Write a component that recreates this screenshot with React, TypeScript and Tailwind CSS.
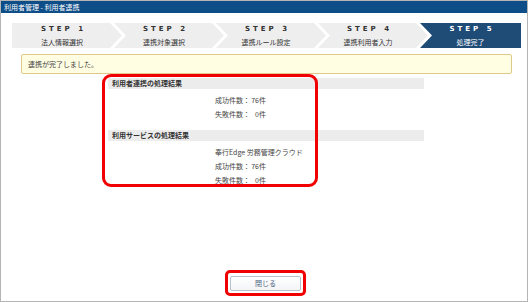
import React from 'react';

const steps = [
  { no: 1, label: '法人情報選択' },
  { no: 2, label: '連携対象選択' },
  { no: 3, label: '連携ルール設定' },
  { no: 4, label: '連携利用者入力' },
  { no: 5, label: '処理完了' },
];

const jp = { fontFamily: '"Noto Sans CJK JP", "Noto Sans", sans-serif' };

const Count: React.FC<{ label: string; value: number }> = ({ label, value }) => (
  <div className="h-[14px] flex items-center pl-[107px] text-[7px] text-[#444]">
    <span>{label}：</span>
    <span className="inline-block w-[9px] text-right">{value}</span>
    <span>件</span>
  </div>
);

const SectionHead: React.FC<{ title: string }> = ({ title }) => (
  <div className="h-[11px] flex items-center pl-[4px] bg-[#ececec] text-[7px] font-bold text-[#333]">
    {title}
  </div>
);

export default function App() {
  return (
    <div className="w-[528px] h-[302px] bg-white border border-[#b4b4b4] flex flex-col" style={jp}>
      {/* title bar */}
      <div className="h-[12px] bg-[#0d4d88] text-white text-[7px] leading-[12px] pl-[3px]">
        利用者管理 - 利用者連携
      </div>

      {/* steps */}
      <div className="flex mt-[10px] ml-[11px] mr-[6px] h-[25px]">
        {steps.map((s, i) => {
          const last = i === steps.length - 1;
          const shape =
            i === 0
              ? 'w-[110px] pr-[10px] [clip-path:polygon(0_0,calc(100%_-_12px)_0,100%_50%,calc(100%_-_12px)_100%,0_100%)]'
              : last
              ? 'flex-1 -ml-[8px] [clip-path:polygon(0_0,100%_0,100%_100%,0_100%,12px_50%)]'
              : 'w-[110px] pr-[10px] -ml-[8px] [clip-path:polygon(0_0,calc(100%_-_12px)_0,100%_50%,calc(100%_-_12px)_100%,0_100%,12px_50%)]';
          return (
            <div
              key={s.no}
              className={`${shape} ${last ? 'bg-[#1f4b77] text-white' : 'bg-[#eeeeee] text-[#333]'} flex flex-col items-center justify-center`}
            >
              <div
                className="text-[7px] font-bold leading-[10px] tracking-[3px] pl-[3px]"
                style={{ fontFamily: '"DejaVu Sans", Verdana, sans-serif' }}
              >
                STEP {s.no}
              </div>
              <div className="text-[7px] leading-[10px] mt-[3px]">{s.label}</div>
            </div>
          );
        })}
      </div>

      {/* notice */}
      <div className="mt-[6px] ml-[20px] mr-[15px] h-[20px] flex items-center pl-[6px] bg-[#fffde2] border border-[#e0c98a] rounded-[2px] text-[7px] text-[#444]">
        連携が完了しました。
      </div>

      {/* results */}
      <div className="relative ml-[107px] w-[316px] mt-[4px]">
        <SectionHead title="利用者連携の処理結果" />
        <div className="pt-[4px]">
          <Count label="成功件数" value={76} />
          <Count label="失敗件数" value={0} />
        </div>
        <div className="mt-[9px]">
          <SectionHead title="利用サービスの処理結果" />
        </div>
        <div className="pt-[4px]">
          <div className="h-[14px] flex items-center pl-[107px] text-[7px] text-[#444]">奉行Edge 労務管理クラウド</div>
          <Count label="成功件数" value={76} />
          <Count label="失敗件数" value={0} />
        </div>
        <div className="absolute -left-[6px] -top-[4px] w-[216px] h-[113px] border-[3px] border-[#f00000] rounded-[9px]" />
      </div>

      {/* footer */}
      <div className="mt-auto mb-[10px] flex justify-center">
        <div className="relative flex ml-[3px]">
          <button className="block w-[71px] h-[15px] bg-gradient-to-b from-white to-[#f3f4f6] border border-[#b9c1cc] rounded-[2px] text-[7px] leading-[13px] text-[#4a5f80]">
            閉じる
          </button>
          <div className="absolute -left-[5px] -top-[6px] w-[81px] h-[26px] border-[3px] border-[#f00000] rounded-[5px]" />
        </div>
      </div>
    </div>
  );
}
